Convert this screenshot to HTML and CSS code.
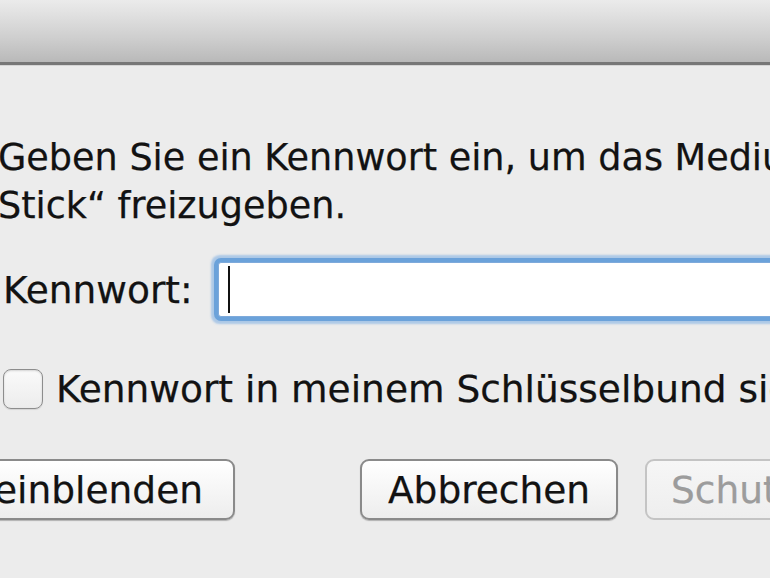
FILE: index.html
```html
<!DOCTYPE html>
<html lang="de">
<head>
<meta charset="utf-8">
<link rel="stylesheet" href="styles.css">
</head>
<body>
<div class="window">
  <div class="titlebar"></div>
  <div class="content">
    <p class="message">Geben Sie ein Kennwort ein, um das Medium „USB-<br>Stick“ freizugeben.</p>
    <div class="field-row">
      <label class="field-label">Kennwort:</label>
      <div class="input"><span class="caret"></span></div>
    </div>
    <div class="check-row">
      <span class="checkbox"></span>
      <span class="check-label">Kennwort in meinem Schlüsselbund sichern</span>
    </div>
    <div class="button-row">
      <span class="button button-left">Kennwort einblenden</span>
      <span class="button button-cancel">Abbrechen</span>
      <span class="button button-disabled">Schutz aufheben</span>
    </div>
  </div>
</div>
</body>
</html>
```

FILE: styles.css
```css
html, body {
  margin: 0;
  padding: 0;
  width: 770px;
  height: 578px;
  overflow: hidden;
  background: #ececec;
}
.window {
  width: 770px;
  height: 578px;
  overflow: hidden;
  font-family: "DejaVu Sans", "Liberation Sans", sans-serif;
  color: #121212;
  -webkit-text-stroke: 0.25px currentColor;
}
.titlebar {
  height: 62px;
  background: linear-gradient(#ebebeb 0%, #e2e2e2 20%, #cfcfcf 60%, #b9b9b9 100%);
  border-bottom: 3px solid #777;
  box-shadow: 0 1px 0 #d5d5d5;
}
.content {
  padding-top: 69px;
  white-space: nowrap;
}
.message {
  margin: 0 0 0 -2px;
  font-size: 36.6px;
  line-height: 48px;
}
.field-row {
  display: flex;
  align-items: center;
  margin-top: 32px;
  margin-left: 3px;
}
.field-label {
  flex-shrink: 0;
  font-size: 37.5px;
}
.input {
  flex-shrink: 0;
  margin-left: 25px;
  width: 600px;
  height: 53px;
  background: #fff;
  border: 1px solid #7eaadb;
  box-shadow: 0 0 0 4px #6ba2da, 0 0 2px 7px rgba(120,172,225,0.55);
  border-radius: 3px;
  display: flex;
  align-items: center;
}
.caret {
  margin-left: 9px;
  width: 2px;
  height: 47px;
  background: #111;
}
.check-row {
  display: flex;
  align-items: center;
  margin-top: 50px;
  margin-left: 3px;
}
.checkbox {
  flex-shrink: 0;
  box-sizing: border-box;
  width: 40px;
  height: 40px;
  border: 1.5px solid #8d8d8d;
  border-radius: 8px;
  background: linear-gradient(#fafafa, #ececec);
  box-shadow: inset 0 1px 2px rgba(0,0,0,0.15), 0 1px 1px rgba(0,0,0,0.1);
}
.check-label {
  flex-shrink: 0;
  margin-left: 13px;
  font-size: 37.5px;
}
.button-row {
  display: flex;
  margin-top: 48px;
}
.button {
  flex-shrink: 0;
  box-sizing: border-box;
  height: 61px;
  display: flex;
  align-items: center;
  justify-content: center;
  font-size: 37.5px;
  border: 2px solid #8a8a8a;
  border-radius: 9px;
  background: linear-gradient(#ffffff, #f6f6f6 50%, #ededed);
  box-shadow: 0 1px 1px rgba(0,0,0,0.25);
}
.button-left {
  width: 480px;
  margin-left: -245px;
  justify-content: flex-end;
  padding-right: 30px;
}
.button-cancel {
  width: 258px;
  margin-left: 125px;
}
.button-disabled {
  width: 300px;
  margin-left: 27px;
  justify-content: flex-start;
  padding-left: 24px;
  color: #9c9c9c;
  border-color: #c4c4c4;
  box-shadow: none;
  background: linear-gradient(#f6f6f6, #eeeeee);
}
```
